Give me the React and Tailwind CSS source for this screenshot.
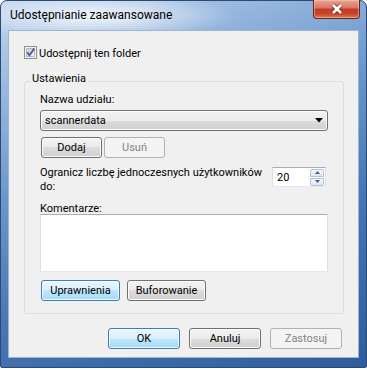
import React from "react";

const btnBase =
  "h-[21px] rounded-[3px] border flex items-center justify-center text-[11px] leading-none";
const btnNormal =
  btnBase +
  " border-[#707070] text-black bg-[image:linear-gradient(to_bottom,#f2f2f2_0%,#ebebeb_50%,#dddddd_50%,#cfcfcf_100%)] shadow-[inset_0_0_0_1px_#fcfcfc]";
const btnDefault =
  btnBase +
  " border-[#3c7fb1] text-black bg-[image:linear-gradient(to_bottom,#eaf6fd_0%,#d9f0fc_50%,#bee6fd_50%,#a7d9f5_100%)] shadow-[inset_0_0_0_1px_#f4fbfe]";
const btnDisabled =
  btnBase + " border-[#adb2b5] text-[#838383] bg-[#f4f4f4]";

function CheckBox() {
  return (
    <svg width="13" height="13" viewBox="0 0 13 13">
      <defs>
        <linearGradient id="cbg" x1="0" y1="0" x2="1" y2="1">
          <stop offset="0" stopColor="#cbcfd5" />
          <stop offset="1" stopColor="#f6f6f6" />
        </linearGradient>
      </defs>
      <rect x="0.5" y="0.5" width="12" height="12" fill="#f4f4f4" stroke="#8e8f8f" />
      <rect x="2.5" y="2.5" width="8" height="8" fill="url(#cbg)" stroke="#b4b9be" />
      <path d="M3.2 6.3 L5.4 9.2 L10.2 2.6" stroke="#4a5d9b" strokeWidth="1.9" fill="none" />
    </svg>
  );
}

function CloseX() {
  return (
    <svg width="14" height="12" viewBox="0 0 14 12">
      <path d="M3 2 L11 10 M11 2 L3 10" stroke="#5b1a12" strokeOpacity="0.55" strokeWidth="4.6" />
      <path d="M3 2 L11 10 M11 2 L3 10" stroke="#ffffff" strokeWidth="2.6" />
    </svg>
  );
}

export default function App() {
  return (
    <div className="w-[367px] h-[370px] bg-white font-[Roboto,sans-serif] text-black">
      <div className="w-[367px] h-[368px] rounded-t-[7px] rounded-b-[2px] border border-[#2c4a72] flex flex-col px-[7px] bg-[image:radial-gradient(ellipse_140px_24px_at_95px_15px,rgba(255,255,255,0.85),rgba(255,255,255,0)_100%),linear-gradient(160deg,#c3d7ee_0%,#98b8df_18%,#6a97cb_40%,#4677b4_65%,#2d5d9c_100%)]">
        {/* title bar */}
        <div className="h-[29px] flex justify-between items-start">
          <div className="pt-[7px] pl-[2px] text-[12px] leading-[15px] text-black">
            Udostępnianie zaawansowane
          </div>
          <div className="-mt-[1px] -mr-[1px] w-[47px] h-[19px] rounded-b-[4px] border border-t-0 border-[#6b2419] flex items-center justify-center bg-[image:linear-gradient(to_bottom,#e8a595_0%,#d97966_42%,#c23b28_52%,#c8452c_78%,#e0804f_100%)] shadow-[inset_0_0_0_1px_rgba(255,210,200,0.45)]">
            <CloseX />
          </div>
        </div>

        {/* client area */}
        <div className="w-[351px] h-[328px] bg-[#f0f0f0] border border-[#9fb5cf] flex flex-col text-[11px]">
          <div className="mt-[14px] ml-[15px] h-[15px] flex items-center gap-[2px]">
            <CheckBox />
            <span className="leading-[15px] pt-[1px]">Udostępnij ten folder</span>
          </div>

          <div className="mt-[21px] ml-[15px] w-[320px] border border-[#d5dfe5] rounded-[3px] flex flex-col pb-[12px]">
            <span className="self-start -mt-[11px] ml-[5px] px-[2px] bg-[#f0f0f0] leading-[16px]">
              Ustawienia
            </span>
            <div className="pl-[15px] w-[304px] flex flex-col">
              <div className="mt-[5px] leading-[16px]">Nazwa udziału:</div>
              <div className="mt-[2px] h-[21px] w-[288px] rounded-[3px] border border-[#707070] flex items-center justify-between pl-[4px] pr-[4px] bg-[image:linear-gradient(to_bottom,#f2f2f2_0%,#ebebeb_50%,#dddddd_50%,#cfcfcf_100%)] shadow-[inset_0_0_0_1px_#fcfcfc]">
                <span className="leading-none">scannerdata</span>
                <svg width="8" height="5" viewBox="0 0 8 5">
                  <path d="M0 0 H8 L4 4.5 Z" fill="#000" />
                </svg>
              </div>
              <div className="mt-[6px] ml-[1px] flex gap-[2px]">
                <div className={btnNormal + " w-[61px]"}>Dodaj</div>
                <div className={btnDisabled + " w-[61px]"}>Usuń</div>
              </div>
              <div className="mt-[8px] flex items-start w-[288px]">
                <div className="w-[228px] leading-[14px]">
                  Ogranicz liczbę jednoczesnych użytkowników do:
                </div>
                <div className="ml-auto mr-[2px] mt-[1px] w-[54px] h-[20px] bg-white border border-[#abadb3] border-b-[#e3e9ef] border-x-[#dbdfe6] flex items-center justify-between pl-[4px] pr-[1px]">
                  <span className="leading-none">20</span>
                  <div className="flex flex-col gap-[1px]">
                    <div className="w-[14px] h-[8px] border border-[#b3c2d4] rounded-t-[2px] bg-[image:linear-gradient(to_bottom,#f4f8fc,#dde7f2)] flex items-center justify-center">
                      <svg width="5" height="3" viewBox="0 0 5 3">
                        <path d="M0 3 H5 L2.5 0 Z" fill="#4c607f" />
                      </svg>
                    </div>
                    <div className="w-[14px] h-[8px] border border-[#b3c2d4] rounded-b-[2px] bg-[image:linear-gradient(to_bottom,#f4f8fc,#dde7f2)] flex items-center justify-center">
                      <svg width="5" height="3" viewBox="0 0 5 3">
                        <path d="M0 0 H5 L2.5 3 Z" fill="#4c607f" />
                      </svg>
                    </div>
                  </div>
                </div>
              </div>
              <div className="mt-[8px] leading-[14px]">Komentarze:</div>
              <div className="-mt-[2px] h-[58px] w-[288px] bg-white border border-[#abadb3] border-b-[#e3e9ef] border-x-[#dbdfe6]" />
              <div className="mt-[8px] ml-[1px] flex gap-[7px]">
                <div className={btnDefault + " w-[79px]"}>Uprawnienia</div>
                <div className={btnNormal + " w-[79px]"}>Buforowanie</div>
              </div>
            </div>
          </div>

          <div className="mt-[14px] pr-[16px] flex justify-end gap-[9px]">
            <div className={btnDefault + " w-[72px]"}>OK</div>
            <div className={btnNormal + " w-[72px]"}>Anuluj</div>
            <div className={btnDisabled + " w-[72px]"}>Zastosuj</div>
          </div>
        </div>
      </div>
    </div>
  );
}
